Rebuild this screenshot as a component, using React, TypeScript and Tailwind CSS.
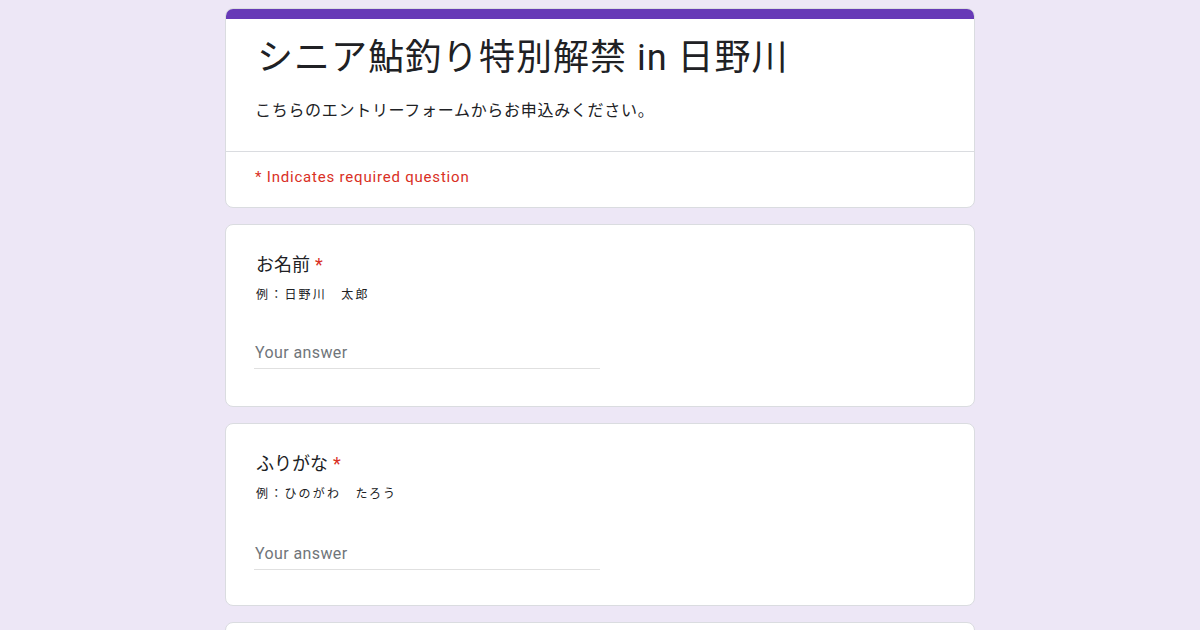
import React from 'react';

const font = { fontFamily: "Roboto, 'Noto Sans CJK JP', sans-serif" };

function Question({ label, hint, wide }: { label: string; hint: string; wide?: boolean }) {
    return (
        <div className={`bg-white rounded-lg border border-[#dadce0] px-[28px] pt-[28px] ${wide ? 'pb-[35px]' : 'pb-[37px]'}`}>
            <div className="ml-[2px] text-[18px] leading-[24px] text-[#202124]">
                {label}
                <span className="text-[#d93025] ml-[5px]">*</span>
            </div>
            <div className="ml-[2px] mt-[9px] text-[12px] leading-[18px] tracking-[2.2px] text-[#202124]">{hint}</div>
            <div className={`${wide ? 'mt-[39px]' : 'mt-[37px]'} w-[346px] border-b border-[#e0e0e0] pb-[3px] pl-[1px] text-[16px] leading-[24px] tracking-[0.4px] text-[#70757a]`}>
                Your answer
            </div>
        </div>
    );
}

export default function App() {
    return (
        <div className="min-h-screen bg-[#ede7f6] overflow-hidden" style={font}>
            <div className="w-[750px] mx-auto pt-[8px] flex flex-col gap-[16px]">
                <div className="bg-white rounded-lg border border-[#dadce0] overflow-hidden">
                    <div className="h-[10px] bg-[#673ab7]"></div>
                    <div className="px-[31px] pt-[17px] pb-[28px] border-b border-[#dadce0]">
                        <h1 className="text-[36px] leading-[45px] tracking-[1px] text-[#202124]">シニア鮎釣り特別解禁 in 日野川</h1>
                        <p className="-ml-[2px] mt-[18px] text-[16px] leading-[24px] tracking-[0.7px] text-[#202124]">
                            こちらのエントリーフォームからお申込みください。
                        </p>
                    </div>
                    <div className="px-[29px] pt-[15px] pb-[20px] text-[15px] leading-[20px] tracking-[0.8px] text-[#d93025]">
                        * Indicates required question
                    </div>
                </div>
                <Question label="お名前" hint="例：日野川　太郎" />
                <Question label="ふりがな" hint="例：ひのがわ　たろう" wide />
                <div className="bg-white rounded-lg border border-[#dadce0] h-[200px]"></div>
            </div>
        </div>
    );
}
